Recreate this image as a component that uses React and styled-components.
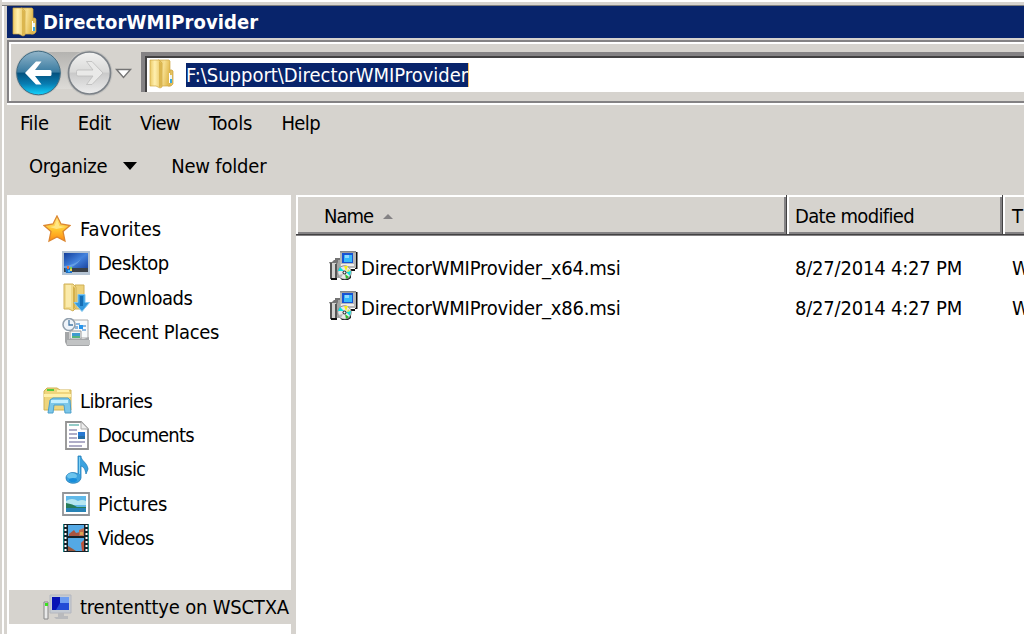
import React from 'react';
import styled, { createGlobalStyle } from 'styled-components';

const Global = createGlobalStyle`
  *{box-sizing:border-box}
  html,body,#root{height:100%;margin:0;overflow:hidden}
  body{background:#d6d3ce;color:#000;font:20px "DejaVu Sans Condensed","DejaVu Sans",sans-serif;font-stretch:condensed}
  svg{display:block;flex:none}
`;
const Window = styled.div`
  width:1024px;height:634px;overflow:hidden;display:flex;flex-direction:column;padding-left:7px;
  background:linear-gradient(90deg,#d6d3ce 2px,#fff 2px 4px,#d6d3ce 4px);
`;
const TopEdge = styled.div`
  height:6px;flex:none;margin-left:-5px;
  background:linear-gradient(#fff 2px,#d6d3ce 2px 5px,#808080 5px);
`;
const Text = styled.span`
  white-space:pre;line-height:24px;letter-spacing:${p => p.$track || 0}px;
`;
const TitleBar = styled.header`
  height:32px;flex:none;display:flex;align-items:center;gap:5px;padding-left:5px;background:#08246b;color:#fff;
  font-size:20px;font-weight:bold;
`;
const NavBar = styled.div`
  height:63px;flex:none;margin-top:2px;display:flex;align-items:flex-start;padding:7px 0 0 6px;
  border:2px solid #848284;border-right:0;
  box-shadow:inset 2px 2px #fff,0 2px #fff;
`;
const Address = styled.div`
  height:40px;flex:1;margin:3px 0 0 8px;display:flex;align-items:center;gap:11px;padding-left:4px;background:#fff;
  border-top:4px solid #848284;border-left:4px solid #848284;box-shadow:inset 2px 2px #424142;
`;
const Selection = styled(Text)`
  background:#08246b;color:#fff;border-right:1px solid #f7c36b;height:24px;margin-top:2px;
`;
const MenuBar = styled.nav`
  height:38px;flex:none;display:flex;align-items:center;gap:29px;padding:2px 0 0 13px;
`;
const Toolbar = styled.div`
  height:54px;flex:none;display:flex;align-items:center;padding:0 0 4px 22px;
  svg{margin:0 34px 0 16px}
`;
const Body = styled.main`flex:1;min-height:0;display:flex;`;
const Tree = styled.aside`
  width:284px;flex:none;overflow:hidden;background:#fff;padding:16.8px 0 0 2px;margin-right:5px;
`;
const TreeRow = styled.div`
  height:34.35px;display:flex;align-items:center;padding-left:${p => (p.$child ? 53 : 34)}px;
  background:${p => (p.$selected ? '#d6d3ce' : 'transparent')};
`;
const IconSlot = styled.span`
  width:${p => (p.$child ? 36 : 37)}px;flex:none;
`;
const Files = styled.section`flex:1;min-width:0;background:#fff;`;
const Columns = styled.div`
  display:grid;grid-template-columns:491px 216px 1fr;height:41px;border-bottom:1px solid #848284;margin-bottom:12px;
`;
const ColumnHead = styled.div`
  min-width:0;overflow:hidden;
  display:flex;align-items:center;gap:10px;padding:3px 0 0 ${p => p.$inset}px;background:#d6d3ce;
  border-right:${p => (p.$open ? 0 : 1)}px solid #424142;border-bottom:1px solid #424142;
  box-shadow:inset 2px 2px #fff,inset ${p => (p.$open ? 0 : -2)}px -2px #848284;
`;
const FileRow = styled.div`
  height:40px;display:grid;grid-template-columns:491px 216px 1fr;align-items:center;
`;
const FileCell = styled.div`
  min-width:0;overflow:hidden;
  display:flex;align-items:center;gap:3px;padding-left:${p => p.$inset}px;
  svg{margin-bottom:5px}
`;

const Folder = () => (
  <svg width="26" height="30" viewBox="0 0 26 30">
    <defs>
      <linearGradient id="leaf" x2="1"><stop stopColor="#eccb68" /><stop offset=".4" stopColor="#fff0b0" /><stop offset="1" stopColor="#e6c15a" /></linearGradient>
      <linearGradient id="cover" x2="1" y2=".3"><stop stopColor="#e3bf5a" /><stop offset=".5" stopColor="#f7e092" /><stop offset="1" stopColor="#e2bb50" /></linearGradient>
    </defs>
    <path d="M19 11h4l1 1v13l-2 2h-3z" fill="#e5c25e" stroke="#c79f3e" strokeWidth=".7" />
    <path d="M9 1h11l1 1v25H9z" fill="url(#cover)" stroke="#d0aa48" strokeWidth=".7" />
    <path d="M1 1h9l3 3v24l-2 1-4-2H1z" fill="url(#leaf)" stroke="#cfa642" strokeWidth=".7" />
    <path d="M10 2l3 3v21l-2 2h-1z" fill="#dbb64f" />
    <path d="M20 14h1v10h-1z" fill="#fff" /><path d="M21 20h2v4h-2z" fill="#39a9dc" /><path d="M21 16h2v4h-2z" fill="#e9f4f6" />
  </svg>
);
const NavButtons = () => (
  <svg width="118" height="48" viewBox="0 0 118 48">
    <defs>
      <linearGradient id="blue" x2="0" y2="1"><stop stopColor="#92b5c9" /><stop offset=".48" stopColor="#397ba1" /><stop offset=".5" stopColor="#04517e" /><stop offset=".75" stopColor="#087db2" /><stop offset="1" stopColor="#12d5ff" /></linearGradient>
      <linearGradient id="grey" x2="0" y2="1"><stop stopColor="#f2f2f1" /><stop offset=".48" stopColor="#d9d9d8" /><stop offset=".5" stopColor="#c9c9c9" /><stop offset="1" stopColor="#eee" /></linearGradient>
      <linearGradient id="bridge" x2="0" y2="1"><stop stopColor="#b4b3b0" /><stop offset="1" stopColor="#dddbd7" /></linearGradient>
    </defs>
    <path d="M27 3h45v37H27z" fill="url(#bridge)" />
    <circle cx="23.5" cy="24" r="23" fill="#bebebb" /><circle cx="23.5" cy="24" r="21.8" fill="url(#blue)" stroke="#406b82" />
    <circle cx="74.5" cy="24" r="23" fill="#c4c3c0" /><circle cx="74.5" cy="24" r="21" fill="url(#grey)" stroke="#7c8288" strokeWidth="1.7" />
    <path d="M10 24L21 12.5h5.5L20 21h15q1.500 0 1.500 1.500v3q0 1.500-1.500 1.500H20l6.500 8.500H21z" fill="#fff" />
    <path d="M88 24L77 12.500h-5.500L78 21H63q-1.500 0-1.500 1.500v3q0 1.500 1.500 1.500h15l-6.500 8.500H77z" fill="#e9e9e8" stroke="#bbb" strokeWidth=".8" />
    <path d="M101.500 20.500h14l-7 8z" fill="#fff" stroke="#747474" strokeWidth="1.4" />
  </svg>
);
const Star = () => (
  <svg width="28" height="28" viewBox="0 0 28 28"><defs><linearGradient id="star" x2="0" y2="1"><stop stopColor="#ffe889" /><stop offset=".55" stopColor="#ffc52d" /><stop offset="1" stopColor="#ff8b12" /></linearGradient></defs><path d="M14 1l4 8 9 1.5-7 6 2 9.5-8-4-8 4 2-9.5-7-6L10 9z" fill="url(#star)" stroke="#dc8630" strokeWidth="1.3" /><path d="M14 5l2.5 6 6 1-9 2-7-2 5-1z" fill="#ffef9c" opacity=".7" /></svg>
);
const Desktop = () => (
  <svg width="28" height="24" viewBox="0 0 28 24"><defs><linearGradient id="desk" x2="1" y2="1"><stop stopColor="#123e9b" /><stop offset=".5" stopColor="#4382dd" /><stop offset="1" stopColor="#173f9c" /></linearGradient></defs><path d="M0 0h28v24H0z" fill="#b5c4d4" /><path d="M2 2h24v17H2z" fill="url(#desk)" /><path d="M2 15q9 0 17-7-6 9-17 10z" fill="#7db5ed" opacity=".6" /><path d="M2 17h24v4H2z" fill="#3b4148" /><path d="M3 17h7v5H4z" fill="#1e72c8" /><path d="M5 15h2v3H5z" fill="#ee6f35" /><path d="M8 16h2v2H8z" fill="#83d452" /><path d="M6 19h2v2H6z" fill="#46b8ff" /><path d="M8 18h2v2H8z" fill="#f5d455" /></svg>
);
const Downloads = () => (
  <svg width="28" height="30" viewBox="0 0 28 30"><path d="M12 2h9v24h-9z" fill="#edd27c" stroke="#d0b057" /><path d="M1 1h9l3 3v21l-3 3-4-2H1z" fill="#f1da8a" stroke="#d0b057" /><path d="M3 2h5v22H3z" fill="#faeaab" /><path d="M10 3l2 2v20l-2 2z" fill="#d5b14b" /><path d="M15 11.500h7v8h4.500L19 28.500l-8-9h4z" fill="#3399df" stroke="#81c7ef" /><path d="M17 13h3v10h-3z" fill="#166eb4" /></svg>
);
const Recent = () => (
  <svg width="28" height="28" viewBox="0 0 28 28"><path d="M10 2h16v18H10z" fill="#f8fafb" stroke="#aaa" /><path d="M14 5h4v2h-4zM19 7h5v2h-5zM13 8h3v3h-3zM20 11h4v2h-4z" fill="#8eb7de" /><path d="M17 7h4v4h-4z" fill="#2796ed" /><path d="M8 13h11v8H8z" fill="#f4f6f7" stroke="#999" /><path d="M10 15h8v5h-8z" fill="#3d9bcf" /><path d="M10 18h8v2h-8z" fill="#56b47c" /><circle cx="7" cy="6.5" r="6" fill="#eff4fa" stroke="#92a0ad" strokeWidth="1.6" /><path d="M7 2v5h4" fill="none" stroke="#477aa6" strokeWidth="1.3" /><path d="M3 14h4v7h15l5-2v9H5l-2-4z" fill="#a4a6a8" /><path d="M5 22h23v5H5z" fill="#c1c3c4" /></svg>
);
const Libraries = () => (
  <svg width="29" height="27" viewBox="0 0 29 27"><path d="M2 3l2-2h10l3 2h11v20H1V4z" fill="#efd57d" stroke="#d1b355" /><path d="M4 2h7v2H4z" fill="#50cc3c" /><path d="M14 3h12v2H14z" fill="#fff1ab" /><path d="M1 7h27v3H1z" fill="#fff0aa" /><path d="M5 26l2-13 3-2h15l2 2 1 13h-6l-1-8H11l-1 8z" fill="#7cc7e9" stroke="#4c9fca" /><path d="M8 13h17v3H8z" fill="#c5efff" /></svg>
);
const Documents = () => (
  <svg width="24" height="29" viewBox="0 0 24 29"><path d="M1 1h15l7 7v20H1z" fill="#fff" stroke="#929292" strokeWidth="1.8" /><path d="M16 1v7h7" fill="#eee" stroke="#aaa" /><path d="M4 4h10" stroke="#4eaaa3" strokeWidth="1.2" /><path d="M4 9h8M4 13h8M4 17h8M4 21h16M4 25h13" stroke="#9593b5" strokeWidth="1.3" /><path d="M13 11h7v7h-7z" fill="#2879d1" /><path d="M13 15h7v3h-7z" fill="#276fa5" /></svg>
);
const Music = () => (
  <svg width="24" height="29" viewBox="0 0 24 29"><path d="M13 1h3c0 5 6 6 7 13l-2 5c-1-5-2-7-5-8v12c-1 7-15 7-15 0 0-5 7-7 12-4z" fill="#3ba2df" stroke="#257db8" strokeWidth=".8" /><path d="M14 2h1v17h-1z" fill="#83d2f5" /><ellipse cx="7" cy="21" rx="5" ry="3" fill="#6bc4ed" /><ellipse cx="8" cy="25" rx="4" ry="2" fill="#168ddb" /></svg>
);
const Pictures = () => (
  <svg width="28" height="24" viewBox="0 0 28 24"><path d="M1 1h26v22H1z" fill="#fff" stroke="#929599" strokeWidth="1.8" /><path d="M4 4h20v16H4z" fill="#61b9e9" /><path d="M4 9q6-4 12 0 4-2 8 0v4H4z" fill="#b6e6f1" /><path d="M4 11q7 1 11 4h9v2H4z" fill="#287c58" /><path d="M4 16h20v4H4z" fill="#2783b6" /></svg>
);
const Videos = () => (
  <svg width="26" height="28" viewBox="0 0 26 28"><path d="M0 0h26v28H0z" fill="#14222a" /><path d="M5 1h16v11H5zM5 14h16v13H5z" fill="#54a9e5" /><path d="M6 10l5-4 2 3 4-1v4H6z" fill="#a95541" /><path d="M16 6l5-2v8h-5z" fill="#c06a4c" /><path d="M17 8h3v3h-3z" fill="#d7a554" /><path d="M5 22l5 3 3 2H5z" fill="#9b563b" /><path d="M21 16l-3 3 1 8h2z" fill="#bd543b" /><path d="M2.5 1v26M23.5 1v26" stroke="#fff" strokeWidth="2" strokeDasharray="2 2" /><path d="M.5 0v28M25.5 0v28" stroke="#1b8384" /></svg>
);
const Computer = () => (
  <svg width="29" height="26" viewBox="0 0 29 26"><path d="M7 1h21v18H7z" fill="#c5cbd3" stroke="#b4b7bf" /><path d="M9 3h17v13H9z" fill="#0612b5" /><path d="M17 3h9v6h-9z" fill="#6e9df1" /><path d="M17 9h9v7H13z" fill="#224bd6" /><path d="M15 19h6v3h4v3H13l-2-2h4z" fill="#b9babd" /><path d="M1 8h4v17H1z" fill="#e9e9e9" stroke="#888" /><path d="M2 9h3v3H2z" fill="#3ae21f" /></svg>
);
const Installer = () => (
  <svg width="29" height="29" viewBox="0 0 29 29"><path d="M5 9h7v18H5z" fill="#a5a6a5" /><path d="M0 11h3l2-2h4v2l-1 2H1zM6 7h5v2H6z" fill="#747474" /><path d="M2 12h5v16H2z" fill="#d2d2d0" /><path d="M1 12h2v16H1zM6 13h2v15H6z" fill="#555" /><path d="M2 27h6v2H2zM27 1h1.500v17H26v2h-4v-2h4z" fill="#111" /><path d="M11 0h16v17H11z" fill="#b5b6b5" /><path d="M11 0h16v1.500H11z" fill="#888" /><path d="M13 2h11v10H13z" fill="#1754d4" /><path d="M15 4h8v7h-8z" fill="#35b9f9" /><path d="M16 4h4v3h-4z" fill="#8fd9ff" /><path d="M12 13h13v2H12z" fill="#eee" /><circle cx="15.500" cy="21.500" r="6.800" fill="#e8e8e8" stroke="#777" strokeWidth=".8" /><path d="M9 20l2-4 4 4z" fill="#00e5e6" /><path d="M15 15h4l-2 5z" fill="#f4ed18" /><path d="M17 21l5-1-1 5z" fill="#0be0db" /><path d="M9 24l5-1-2 4z" fill="#b8b8b8" /><path d="M16 23l4 3-3 2z" fill="#35b62d" /><path d="M19 18l2 2-3 1z" fill="#dfe83c" /><circle cx="15.500" cy="21.500" r="2" fill="#333" /><circle cx="15.500" cy="21.500" r="1" fill="#fff" /><path d="M11 27q5 2.500 9 0l2-3v3l-3 2h-6z" fill="#222" /></svg>
);

const menu = [['File', -.3], ['Edit', -.4], ['View', -.7], ['Tools', -.1], ['Help', -.6]];
const tree = [
  ['Favorites', Star, false, 0], ['Desktop', Desktop, true, -.5], ['Downloads', Downloads, true, -.5], ['Recent Places', Recent, true, -.3],
  null,
  ['Libraries', Libraries, false, -.6], ['Documents', Documents, true, -.75], ['Music', Music, true, -.8], ['Pictures', Pictures, true, -.25], ['Videos', Videos, true, -.65],
  null,
  ['trententtye on WSCTXA', Computer, false, -.2],
];
const files = ['DirectorWMIProvider_x64.msi', 'DirectorWMIProvider_x86.msi'];
const iconPad = { Documents: 3, Music: 3, Videos: 1, Downloads: 1 };

const Nudge = styled.span`display:block;padding-left:${p => p.$x || 0}px;`;

export default function App() {
  return (
    <Window>
      <Global />
      <TopEdge />
      <TitleBar><Folder /><Text $track={.1}>DirectorWMIProvider</Text></TitleBar>
      <NavBar>
        <NavButtons />
        <Address><Folder /><Selection $track={-.03}>F:\Support\DirectorWMIProvider</Selection></Address>
      </NavBar>
      <MenuBar>{menu.map(([t, k]) => <Text key={t} $track={k}>{t}</Text>)}</MenuBar>
      <Toolbar>
        <Text $track={-.3}>Organize</Text>
        <svg width="14" height="8" viewBox="0 0 14 8"><path d="M0 0h14L7 8z" /></svg>
        <Text $track={-.2}>New folder</Text>
      </Toolbar>
      <Body>
        <Tree>
          {tree.map((item, i) => {
            if (!item) return <TreeRow key={i} />;
            const [name, Icon, child, track] = item;
            return (
              <TreeRow key={name} $child={child} $selected={i === 11}>
                <IconSlot $child={child}><Nudge $x={iconPad[name]}><Icon /></Nudge></IconSlot>
                <Text $track={track}>{name}</Text>
              </TreeRow>
            );
          })}
        </Tree>
        <Files>
          <Columns>
            <ColumnHead $inset={28}><Text $track={-1}>Name</Text><svg width="10" height="5" viewBox="0 0 10 5"><path d="M5 0l5 5H0z" fill="#848284" /></svg></ColumnHead>
            <ColumnHead $inset={8}><Text $track={-.65}>Date modified</Text></ColumnHead>
            <ColumnHead $inset={9} $open><Text>T</Text></ColumnHead>
          </Columns>
          {files.map(name => (
            <FileRow key={name}>
              <FileCell $inset={33}><Installer /><Text $track={-.2}>{name}</Text></FileCell>
              <FileCell $inset={8}><Text $track={-.2}>8/27/2014 4:27 PM</Text></FileCell>
              <FileCell $inset={9}><Text>W</Text></FileCell>
            </FileRow>
          ))}
        </Files>
      </Body>
    </Window>
  );
}
